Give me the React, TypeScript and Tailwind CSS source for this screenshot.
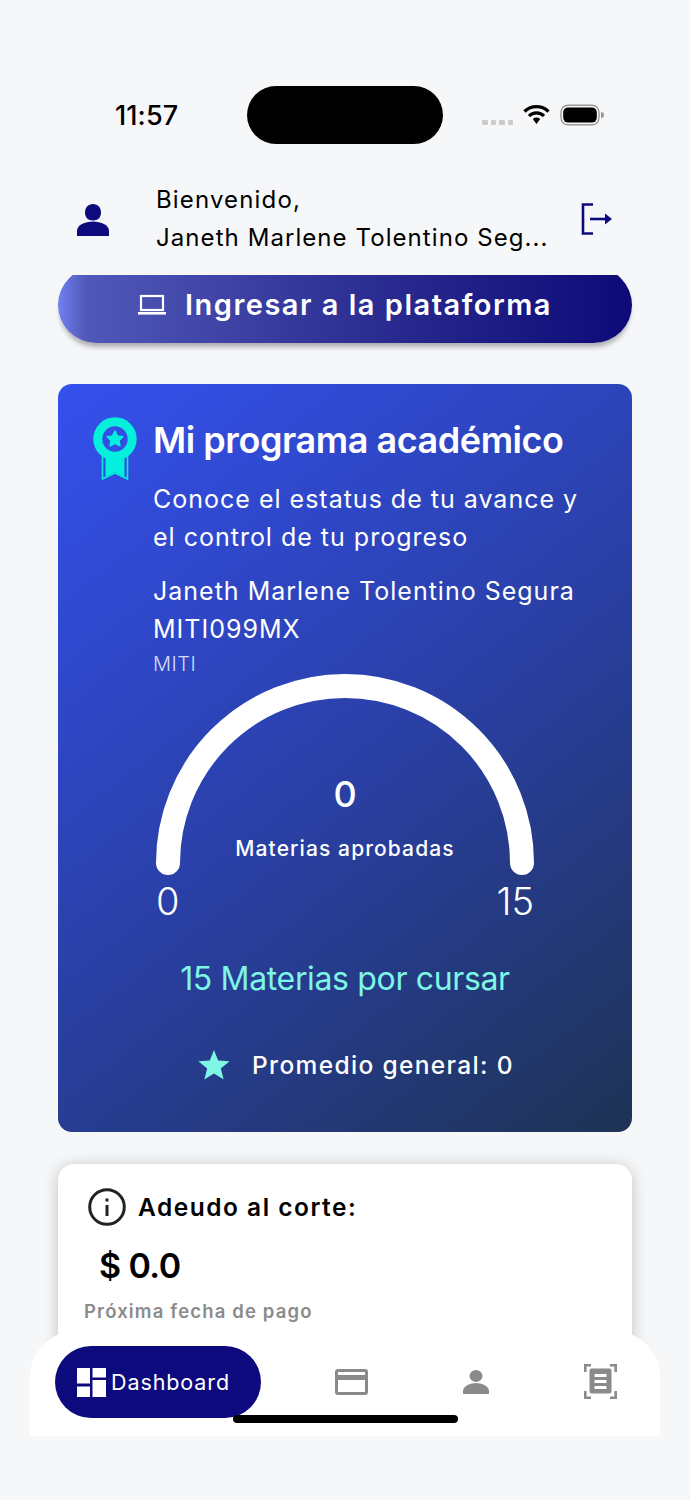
import React from "react";

function Gauge() {
  return (
    <svg width="378" height="202" viewBox="0 0 378 202" className="block">
      <path d="M12 189 A177 177 0 0 1 366 189" fill="none" stroke="#ffffff" strokeWidth="24" strokeLinecap="round" />
    </svg>
  );
}

function Medal() {
  return (
    <svg width="44" height="64" viewBox="0 0 44 64" className="shrink-0">
      <path d="M9.5 38 V62 L22 56 L34.5 62 V38" fill="none" stroke="#05f0dc" strokeWidth="1.6" strokeLinejoin="miter" />
      <path d="M12.5 38 V60 L22 55 L31.5 60 V38 Z" fill="#05f0dc" />
      <circle cx="22" cy="22" r="17.2" fill="none" stroke="#05f0dc" strokeWidth="9" />
      <path d="M22 14 L24.4 19 L29.8 19.7 L25.9 23.4 L26.9 28.8 L22 26.2 L17.1 28.8 L18.1 23.4 L14.2 19.7 L19.6 19 Z" fill="#05f0dc" stroke="#05f0dc" strokeWidth="1.6" strokeLinejoin="round" />
    </svg>
  );
}

export default function App() {
  return (
    <div className="relative h-[1500px] w-[690px] overflow-hidden bg-[#f6f7f9] font-['Inter',sans-serif]">
      {/* status bar */}
      <div className="flex h-[58px] translate-y-[86px] items-center">
        <div className="w-[247px] pl-[115px] pt-[1px] text-[27px] font-medium leading-none tracking-[0.1px] text-black">11:57</div>
        <div className="h-[58px] w-[196px] rounded-[29px] bg-black" />
        <div className="flex items-center pl-[39px]">
          <div className="mt-[15px] flex gap-[3px]">
            <span className="h-[5px] w-[5.5px] rounded-[1px] bg-[#cbcbcb]" />
            <span className="h-[5px] w-[5.5px] rounded-[1px] bg-[#cbcbcb]" />
            <span className="h-[5px] w-[5.5px] rounded-[1px] bg-[#cbcbcb]" />
            <span className="h-[5px] w-[5.5px] rounded-[1px] bg-[#cbcbcb]" />
          </div>
          <svg width="27" height="20" viewBox="0 0 27 20" className="ml-[10px] mt-[-2px]">
            <path d="M1.5 7.5 A17 17 0 0 1 25.5 7.5" fill="none" stroke="#000" strokeWidth="3.2" />
            <path d="M6 12 A10.5 10.5 0 0 1 21 12" fill="none" stroke="#000" strokeWidth="3.2" />
            <path d="M9.8 15 A5.5 5.5 0 0 1 17.2 15 L13.5 20 Z" fill="#000" />
          </svg>
          <svg width="44" height="22" viewBox="0 0 44 22" className="ml-[10px] mt-[-1px]">
            <rect x="1" y="1.2" width="38" height="19.6" rx="7" fill="none" stroke="#9a9a9a" strokeWidth="1.4" />
            <rect x="3.2" y="3.4" width="33.6" height="15.2" rx="5" fill="#000" />
            <path d="M41 8 a3 3 0 0 1 0 6 Z" fill="#9a9a9a" />
          </svg>
        </div>
      </div>

      {/* header */}
      <div className="mt-[123px] flex h-[76px] items-center">
        <div className="w-[156px] pl-[77px]">
          <svg width="32" height="32" viewBox="0 0 32 32" className="mt-[1px]">
            <path d="M16 0 C21 0 24 4 24 8.5 C24 13.5 21 16.5 16 16.5 C11 16.5 8 13.5 8 8.5 C8 4 11 0 16 0 Z" fill="#0d0a7d" />
            <path d="M0 32 V27 C0 21 8 17.5 16 17.5 C24 17.5 32 21 32 27 V32 Z" fill="#0d0a7d" />
          </svg>
        </div>
        <div className="w-[394px] whitespace-nowrap text-[24px] font-normal leading-[38px] text-black">
          <div className="tracking-[1.15px]">Bienvenido,</div>
          <div className="tracking-[1.07px]">Janeth Marlene Tolentino Seg...</div>
        </div>
        <svg width="32" height="32" viewBox="0 0 32 32" className="ml-[31px]">
          <path d="M12 1.5 H2 V30.5 H12" fill="none" stroke="#0d0a7d" strokeWidth="2.6" />
          <path d="M9 16 H26" fill="none" stroke="#0d0a7d" strokeWidth="2.6" />
          <path d="M24 10.5 L31 16 L24 21.5 Z" fill="#0d0a7d" />
        </svg>
      </div>

      {/* scroll area */}
      <div className="mt-[18px] h-[1161px] overflow-hidden px-[58px]">
        <div className="-mt-[8px] flex h-[76px] items-center justify-center rounded-[38px] bg-[linear-gradient(90deg,#7080ee_0%,#5058b8_5%,#3a3ea0_35%,#24248a_65%,#0d0a78_100%)] shadow-[0_6px_5px_-2px_rgba(0,0,0,0.3)]">
          <svg width="28" height="22" viewBox="0 0 28 22" className="mr-[19px]">
            <rect x="3" y="2" width="22" height="14" fill="none" stroke="#ffffff" strokeWidth="2.2" />
            <rect x="0" y="18" width="28" height="2.6" fill="#ffffff" />
          </svg>
          <span className="text-[29px] font-semibold tracking-[1.5px] text-white">Ingresar a la plataforma</span>
        </div>

        {/* program card */}
        <div className="mt-[41px] h-[748px] rounded-[14px] bg-[linear-gradient(142deg,#3450ee_0%,#2a40a8_50%,#1e3354_100%)] pt-[33px]">
          <div className="flex items-start pl-[35px]">
            <Medal />
            <div className="ml-[16px]">
              <div className="mt-[2px] text-[36px] font-semibold leading-[42px] tracking-[-0.45px] text-white">Mi programa académico</div>
              <div className="mt-[19px] text-[25px] leading-[38px] tracking-[1px] text-white">
                Conoce el estatus de tu avance y
                <br />
                el control de tu progreso
              </div>
              <div className="mt-[16px] text-[25px] leading-[38px] tracking-[1px] text-white">
                Janeth Marlene Tolentino Segura
                <br />
                MITI099MX
              </div>
              <div className="text-[20px] font-light leading-[32px] tracking-[0.5px] text-[#d5dcf5]">MITI</div>
            </div>
          </div>

          <div className="mx-auto mt-[-6px] w-[378px]">
            <div className="relative">
              <Gauge />
              <div className="absolute left-0 top-[98px] w-full text-center text-[36px] font-medium leading-[44px] text-white">0</div>
              <div className="absolute left-0 top-[161px] w-full text-center text-[21px] font-medium leading-[28px] tracking-[1.1px] text-white">Materias aprobadas</div>
            </div>
            <div className="-mt-[3px] flex justify-between text-[38px] font-light leading-[56px] text-white">
              <span>0</span>
              <span>15</span>
            </div>
          </div>

          <div className="mt-[28px] text-center text-[32px] font-normal leading-[44px] tracking-[-0.35px] text-[#7df6e6]">15 Materias por cursar</div>

          <div className="mt-[48px] flex items-center pl-[140px]">
            <svg width="32" height="30" viewBox="0 0 32 30" className="-mt-[1px]">
              <path d="M16 0 L20.2 10.6 L31.6 11.3 L22.8 18.6 L25.7 29.6 L16 23.5 L6.3 29.6 L9.2 18.6 L0.4 11.3 L11.8 10.6 Z" fill="#7df6e6" />
            </svg>
            <span className="ml-[22px] text-[24.5px] font-medium leading-[32px] tracking-[1.35px] text-white">Promedio general: 0</span>
          </div>
        </div>

        {/* debt card */}
        <div className="mt-[32px] h-[300px] rounded-[16px] bg-white pt-[24px] shadow-[0_2px_16px_rgba(0,0,0,0.22)]">
          <div className="flex items-center pl-[30px]">
            <svg width="38" height="38" viewBox="0 0 38 38">
              <circle cx="19" cy="19" r="17.3" fill="none" stroke="#222222" strokeWidth="3" />
              <rect x="17.5" y="17" width="3" height="11" fill="#222222" />
              <rect x="17.5" y="10.5" width="3" height="3" fill="#222222" />
            </svg>
            <span className="ml-[12px] text-[24.5px] font-semibold leading-[38px] tracking-[1.5px] text-black">Adeudo al corte:</span>
          </div>
          <div className="mt-[19px] pl-[41px] text-[34px] font-semibold leading-[42px] tracking-[-0.6px] text-black">$ 0.0</div>
          <div className="mt-[11px] pl-[26px] text-[18.5px] font-semibold leading-[26px] tracking-[1.15px] text-[#8b8b8b]">Próxima fecha de pago</div>
        </div>
      </div>

      {/* bottom nav */}
      <div className="absolute left-[30px] top-[1331px] flex h-[105px] w-[630px] items-start rounded-t-[46px] bg-white pl-[25px] pt-[15px]">
        <div className="flex h-[72px] w-[206px] items-center rounded-[36px] bg-[#0d0a7d] pl-[22px]">
          <svg width="29" height="29" viewBox="0 0 29 29">
            <rect x="0" y="0" width="13" height="15.5" fill="#fff" />
            <rect x="15.5" y="0" width="13.5" height="9.5" fill="#fff" />
            <rect x="15.5" y="12" width="13.5" height="17" fill="#fff" />
            <rect x="0" y="18.5" width="13" height="10.5" fill="#fff" />
          </svg>
          <span className="ml-[5px] text-[21.5px] font-normal tracking-[0.9px] text-white">Dashboard</span>
        </div>
        <svg width="33" height="26" viewBox="0 0 33 26" className="ml-[74px] mt-[23px]">
          <path fillRule="evenodd" d="M3 0 H30 A3 3 0 0 1 33 3 V23 A3 3 0 0 1 30 26 H3 A3 3 0 0 1 0 23 V3 A3 3 0 0 1 3 0 Z M3 3 V6 H30 V3 Z M3 11 V23 H30 V11 Z" fill="#8a8a8a" />
        </svg>
        <svg width="28" height="24" viewBox="0 0 28 24" className="ml-[94px] mt-[24px]">
          <ellipse cx="14" cy="6" rx="6.5" ry="6" fill="#8a8a8a" />
          <path d="M1 24 V21 C1 16.5 8 13 14 13 C20 13 27 16.5 27 21 V24 Z" fill="#8a8a8a" />
        </svg>
        <svg width="33" height="35" viewBox="0 0 33 35" className="ml-[94px] mt-[18px]">
          <path d="M1.3 8 V1.3 H7 M26 1.3 H31.7 V8 M1.3 27 V33.7 H7 M26 33.7 H31.7 V27" fill="none" stroke="#8a8a8a" strokeWidth="2.6" />
          <path fillRule="evenodd" d="M7.5 4.5 H25.5 A2 2 0 0 1 27.5 6.5 V27.5 A2 2 0 0 1 25.5 29.5 H7.5 A2 2 0 0 1 5.5 27.5 V6.5 A2 2 0 0 1 7.5 4.5 Z M10.5 10 V13 H22.5 V10 Z M10.5 16 V19 H22.5 V16 Z M10.5 22 V25 H22.5 V22 Z" fill="#8a8a8a" />
        </svg>
      </div>

      {/* home indicator */}
      <div className="absolute left-[233px] top-[1415px] h-[8px] w-[225px] rounded-full bg-black" />
    </div>
  );
}
